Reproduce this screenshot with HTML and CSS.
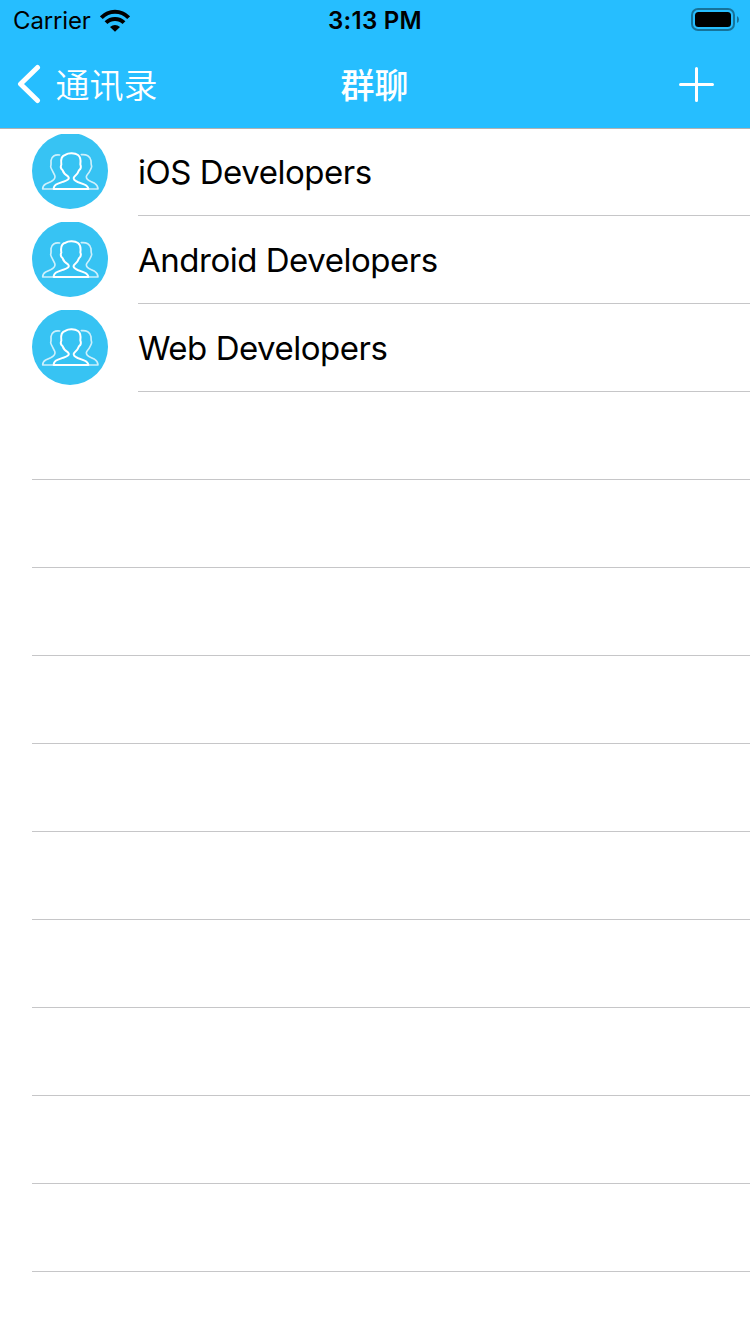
FILE: index.html
```html
<!DOCTYPE html>
<html lang="zh-CN">
<head>
<meta charset="utf-8">
<title>群聊</title>
<link rel="stylesheet" href="styles.css">
</head>
<body>
<svg class="defs" width="0" height="0" aria-hidden="true">
  <symbol id="group" viewBox="24 24 228 225">
    <circle cx="138" cy="135" r="114" fill="#37c3f3"/>
    <g fill="none" stroke="#fff" stroke-linecap="round" stroke-linejoin="round">
      <g stroke-width="5" opacity=".75">
        <path d="M107 87C93 85 82 91 81 104C81 112 82 116 80 121C80 127 84 130 86 136C88 142 93 146 93 152C93 160 88 163 80 167L65 174C58 178 56 182 56 189H86"/>
        <path d="M172 86C187 84 199 91 201 104C201 112 201 116 203 121C203 127 199 130 197 136C195 142 187 146 187 152C187 160 192 163 202 167L212 172C220 177 222 181 222 189H194"/>
      </g>
      <path stroke-width="6" d="M89 189C89 180 94 176 102 173L118 167C132 163 138 158 132 151C123 146 118 140 116 133C110 128 109 122 112 116C109 97 114 88 125 86C134 80 153 81 162 87C170 93 171 102 169 115C172 122 170 129 165 133C163 141 157 147 151 152C145 159 152 164 161 168L180 175C190 179 193 182 193 189Z"/>
    </g>
  </symbol>
</svg>
<header class="header">
  <div class="status">
    <div class="carrier">
      <span class="label">Carrier</span>
      <svg class="wifi" viewBox="299 26 90 69" fill="none" stroke="#000" stroke-width="12">
        <path d="M303 52Q320 34 344 34Q368 34 385 52"/>
        <path d="M317 67Q328 56 344 56Q360 56 371 67"/>
        <path d="M344 94L329 80Q344 68 359 80Z" fill="#000" stroke="none"/>
      </svg>
    </div>
    <span class="time label">3:13 PM</span>
    <svg class="battery" viewBox="0 0 48 24">
      <rect x="1" y="1" width="42" height="21" rx="6" fill="none" stroke="#000" stroke-opacity=".4" stroke-width="2"/>
      <rect x="4" y="4" width="36" height="15" rx="3.5"/>
      <path d="M46 8Q48 9 48 11.5Q48 14 46 15Z" opacity=".4"/>
    </svg>
  </div>
  <nav class="nav">
    <div class="back">
      <svg class="chevron" viewBox="0 0 24 40"><path d="M20.5 3.5L3.5 20L20.5 36.500" fill="none" stroke="#fff" stroke-width="5" stroke-linecap="round" stroke-linejoin="round"/></svg>
      <span class="back-label">通讯录</span>
    </div>
    <h1 class="title">群聊</h1>
    <svg class="plus" viewBox="0 0 35 35"><path d="M1.500 17.500H33.500M17.500 1.500V33.500" stroke="#fff" stroke-width="3" stroke-linecap="round"/></svg>
  </nav>
</header>
<main class="list">
  <div class="row"><svg class="avatar"><use href="#group"/></svg><div class="name">iOS Developers</div></div>
  <div class="row"><svg class="avatar"><use href="#group"/></svg><div class="name">Android Developers</div></div>
  <div class="row"><svg class="avatar"><use href="#group"/></svg><div class="name">Web Developers</div></div>
  <div class="row empty"></div>
  <div class="row empty"></div>
  <div class="row empty"></div>
  <div class="row empty"></div>
  <div class="row empty"></div>
  <div class="row empty"></div>
  <div class="row empty"></div>
  <div class="row empty"></div>
  <div class="row empty"></div>
  <div class="row empty"></div>
</main>
</body>
</html>
```
FILE: styles.css
```css
* { box-sizing: border-box; }
body {
  margin: 0;
  width: 750px;
  height: 1334px;
  overflow: hidden;
  background: #fff;
  color: #000;
  font-family: Inter, "Noto Sans CJK SC", sans-serif;
}
.defs { position: absolute; }
svg { display: block; }
.header {
  height: 128px;
  background: #26beff;
  box-shadow: 0 1px 0 #b2b2b2;
}
.status, .nav {
  display: grid;
  grid-template-columns: 1fr auto 1fr;
  align-items: center;
}
.status { height: 40px; font-size: 24px; line-height: 38px; }
.label { padding-top: 2px; }
.carrier { display: flex; padding-left: 13px; align-items: center; gap: 9px; letter-spacing: -.15px; }
.wifi { width: 30px; height: 23px; }
.time { font-weight: 600; letter-spacing: .3px; }
.battery { justify-self: end; width: 48px; height: 24px; margin-right: 11px; }
.nav { height: 88px; color: #fff; font-size: 34px; line-height: 48px; }
.back { display: flex; align-items: center; padding-left: 17px; gap: 14.5px; font-weight: 350; }
.chevron { width: 24px; height: 40px; }
.back-label { padding-top: 3px; }
.title { margin: 0; padding: 3px 1px 0 0; font-size: 34px; font-weight: 500; }
.plus { justify-self: end; width: 35px; height: 35px; margin-right: 36px; }
.row { display: flex; height: 88px; padding-left: 32px; }
.avatar { width: 76px; height: 75px; margin: 6px 30px 0 0; }
.name {
  flex: 1;
  display: flex;
  align-items: center;
  padding-top: 1px;
  border-bottom: 1px solid #c6c6c8;
  font-size: 33px;
  letter-spacing: -.48px;
}
.empty::after { content: ""; flex: 1; border-bottom: 1px solid #c6c6c8; }
```
